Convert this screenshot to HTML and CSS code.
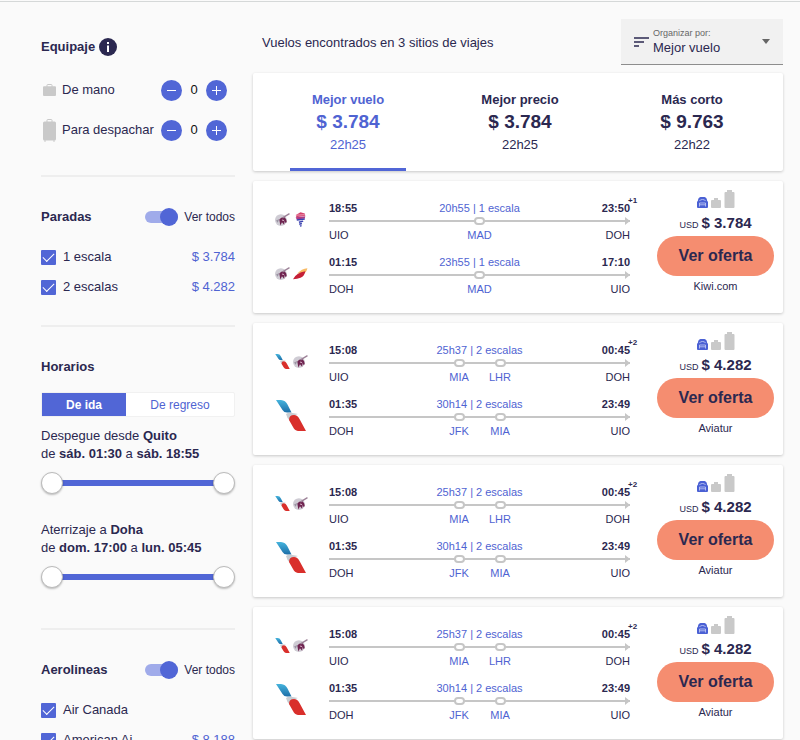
FILE: index.html
```html
<!DOCTYPE html>
<html lang="es">
<head>
    <meta charset="UTF-8">
    <meta name="viewport" content="width=device-width, initial-scale=1.0">
    <title>Vuelos Quito - Doha</title>
    <link rel="stylesheet" href="styles.css">
</head>
<body>
    <svg class="sprite" width="0" height="0" aria-hidden="true">
        <symbol id="cabin" viewBox="0 0 13 12">
            <path d="M4 3V1.200Q4 .5 4.700.5h3.600q.7 0 .7.7V3" fill="none" stroke="currentColor"/>
            <path d="M1 2.300h11q1 0 1 1V11q0 1-1 1H1q-1 0-1-1V3.300q0-1 1-1z" fill="currentColor"/>
        </symbol>
        <symbol id="suitcase" viewBox="0 0 13 23">
            <path d="M4 3V1.200Q4 .5 4.700.5h3.600q.7 0 .7.7V3" fill="none" stroke="currentColor"/>
            <path d="M1.500 2.500h10Q13 2.500 13 4v16q0 1.500-1.500 1.500V23h-1v-1.500h-8V23h-1v-1.500Q0 21.500 0 20V4q0-1.500 1.500-1.500z" fill="currentColor"/>
        </symbol>
        <symbol id="small-cabin" viewBox="0 0 10 10">
            <path d="M3 0h4v2h2q1 0 1 1v6q0 1-1 1H1q-1 0-1-1V3q0-1 1-1h2z" fill="currentColor"/>
        </symbol>
        <symbol id="small-suitcase" viewBox="0 0 11 18">
            <path d="M3 0h5v2h1.500q1 0 1 1v14q0 1-1 1h-8q-1 0-1-1V3q0-1 1-1H3z" fill="currentColor"/>
        </symbol>
        <symbol id="backpack" viewBox="0 0 11 11">
            <path d="M3.500 0h4Q10 .5 10 3.500l1 1.500v5q0 1-1 1H1q-1 0-1-1V5l1-1.500Q1 .5 3.500 0z" fill="#4a60d4"/>
            <path d="M2.500 4Q3 2.500 5.500 2.500T8.500 4M2.500 9.500V6h6v3.500M2.500 7.800h6" fill="none" stroke="#c9d0f5" stroke-width=".8"/>
        </symbol>
        <symbol id="qatar" viewBox="0 0 14 14">
            <circle cx="5.500" cy="7.500" r="5.500" fill="#cfccd4"/>
            <path d="M4 7Q6 4.500 9 5l1.500 2Q11.500 9 10 10.500l-1-2-.5 3.500-2-2.500L5 12.500z" fill="#6f2450"/>
            <path d="M7 5.500L13.500 1.500" stroke="#9d8298" stroke-width="1.300"/>
            <path d="M1 8l3-1.500L2.500 10z" fill="#9b94a3"/>
            <path d="M6.500 7.500l2 .5" stroke="#dcb3ca" stroke-width=".9"/>
        </symbol>
        <symbol id="latam" viewBox="0 0 14 14">
            <path d="M3 2.500L7 .3l4 1.200.5 2L3 5z" fill="#d4416c"/>
            <path d="M2.500 3l8.500-.5" stroke="#f3b5c8" stroke-width=".7"/>
            <path d="M2.500 5l9-1-.5 2-7.500 1z" fill="#b03a83"/>
            <path d="M3.500 7.500L11 6.500M5.500 9.500l4-1M5.800 11.500l2.500-.8M6.500 13.200l1.500-.5" fill="none" stroke="#3b42b0" stroke-width="1.400"/>
        </symbol>
        <symbol id="iberia" viewBox="0 0 14 14">
            <path d="M4 7Q8 2.500 13.500 2q-.5 2.500-2.500 4.500z" fill="#f8ba62"/>
            <path d="M0 12.300Q3 6.500 11.500 5q-.5 4.500-4.500 6-3 1.300-7 1.300z" fill="#c51f36"/>
        </symbol>
        <symbol id="american" viewBox="0 0 30 31">
            <linearGradient id="tail" x2="0" y2="1">
                <stop offset="0" stop-color="#45b4dd"/>
                <stop offset="1" stop-color="#1c6ea8"/>
            </linearGradient>
            <path d="M0 0h5q4.500.3 6.500 4.500L15.500 12.500H11Q8 12.500 6.500 10z" fill="url(#tail)"/>
            <path d="M10 14q2-1.500 5-1.200l7 1.200-6 2-2 5q-3-2.500-4-7z" fill="#c8ccd1"/>
            <path d="M13 20q0-5 5-5 3.500 0 5.500 4L30 31h-8q-3.500-.5-5-4z" fill="#d92f2b"/>
        </symbol>
    </svg>

    <div class="page">
        <aside class="filters">
            <section class="filter luggage">
                <div class="filter-head">
                    <h2>Equipaje</h2>
                    <svg class="info" viewBox="0 0 18 18" role="img" aria-label="Información">
                        <circle cx="9" cy="9" r="9" fill="#2b2850"/>
                        <path d="M8 4h2v2H8zM8 7.500h2V14H8z" fill="#fff"/>
                    </svg>
                </div>
                <div class="bag-row">
                    <svg class="bag-icon" width="13" height="12"><use href="#cabin"/></svg>
                    <span class="bag-name">De mano</span>
                    <button type="button" class="round" aria-label="Quitar equipaje de mano"><svg width="9" height="9"><path d="M0 4.500h9"/></svg></button>
                    <output>0</output>
                    <button type="button" class="round" aria-label="Agregar equipaje de mano"><svg width="9" height="9"><path d="M0 4.500h9M4.500 0v9"/></svg></button>
                </div>
                <div class="bag-row">
                    <svg class="bag-icon" width="13" height="23"><use href="#suitcase"/></svg>
                    <span class="bag-name">Para despachar</span>
                    <button type="button" class="round" aria-label="Quitar equipaje para despachar"><svg width="9" height="9"><path d="M0 4.500h9"/></svg></button>
                    <output>0</output>
                    <button type="button" class="round" aria-label="Agregar equipaje para despachar"><svg width="9" height="9"><path d="M0 4.500h9M4.500 0v9"/></svg></button>
                </div>
            </section>

            <section class="filter">
                <div class="filter-head">
                    <h2>Paradas</h2>
                    <label class="switch"><input type="checkbox" checked>Ver todos</label>
                </div>
                <div class="check-row">
                    <label><input type="checkbox" checked>1 escala</label>
                    <span class="blue">$ 3.784</span>
                </div>
                <div class="check-row">
                    <label><input type="checkbox" checked>2 escalas</label>
                    <span class="blue">$ 4.282</span>
                </div>
            </section>

            <section class="filter schedule">
                <div class="filter-head">
                    <h2>Horarios</h2>
                </div>
                <div class="segmented">
                    <button type="button" class="active">De ida</button>
                    <button type="button">De regreso</button>
                </div>
                <p>Despegue desde <b>Quito</b><br>de <b>sáb. 01:30</b> a <b>sáb. 18:55</b></p>
                <div class="range">
                    <input type="range" min="0" max="100" value="0" aria-label="Despegue desde">
                    <input type="range" min="0" max="100" value="100" aria-label="Despegue hasta">
                </div>
                <p class="arrival">Aterrizaje a <b>Doha</b><br>de <b>dom. 17:00</b> a <b>lun. 05:45</b></p>
                <div class="range">
                    <input type="range" min="0" max="100" value="0" aria-label="Aterrizaje desde">
                    <input type="range" min="0" max="100" value="100" aria-label="Aterrizaje hasta">
                </div>
            </section>

            <section class="filter">
                <div class="filter-head">
                    <h2>Aerolineas</h2>
                    <label class="switch"><input type="checkbox" checked>Ver todos</label>
                </div>
                <div class="check-row">
                    <label><input type="checkbox" checked>Air Canada</label>
                </div>
                <div class="check-row">
                    <label><input type="checkbox" checked>American Ai</label>
                    <span class="blue">$ 8.188</span>
                </div>
            </section>
        </aside>

        <main class="results">
            <div class="results-head">
                <p>Vuelos encontrados en 3 sitios de viajes</p>
                <div class="sort">
                    <svg width="15" height="10"><path d="M0 1h15M0 5h10M0 9h5" stroke="#2b2850" stroke-width="1.500"/></svg>
                    <div class="sort-field">
                        <label for="sort">Organizar por:</label>
                        <select id="sort">
                            <option>Mejor vuelo</option>
                            <option>Mejor precio</option>
                            <option>Más corto</option>
                        </select>
                    </div>
                    <svg width="8" height="5"><path d="M0 0h8L4 5z" fill="#666"/></svg>
                </div>
            </div>

            <nav class="tabs">
                <button type="button" class="tab active"><b>Mejor vuelo</b><strong>$ 3.784</strong><span>22h25</span></button>
                <button type="button" class="tab"><b>Mejor precio</b><strong>$ 3.784</strong><span>22h25</span></button>
                <button type="button" class="tab"><b>Más corto</b><strong>$ 9.763</strong><span>22h22</span></button>
            </nav>

            <article class="flight">
                <div class="legs">
                    <div class="leg">
                        <div class="logos"><svg><use href="#qatar"/></svg><svg><use href="#latam"/></svg></div>
                        <div class="route">
                            <b>18:55</b><span class="blue">20h55 | 1 escala</span><b class="end">23:50<sup>+1</sup></b>
                            <div class="line"><i></i></div>
                            <span>UIO</span><div class="stops"><span>MAD</span></div><span class="end">DOH</span>
                        </div>
                    </div>
                    <div class="leg">
                        <div class="logos"><svg><use href="#qatar"/></svg><svg><use href="#iberia"/></svg></div>
                        <div class="route">
                            <b>01:15</b><span class="blue">23h55 | 1 escala</span><b class="end">17:10</b>
                            <div class="line"><i></i></div>
                            <span>DOH</span><div class="stops"><span>MAD</span></div><span class="end">UIO</span>
                        </div>
                    </div>
                </div>
                <div class="offer">
                    <div class="bags"><svg width="11" height="11"><use href="#backpack"/></svg><svg width="10" height="10"><use href="#small-cabin"/></svg><svg width="11" height="18"><use href="#small-suitcase"/></svg></div>
                    <div class="price"><small>USD</small> <b>$ 3.784</b></div>
                    <button type="button" class="cta">Ver oferta</button>
                    <div class="agency">Kiwi.com</div>
                </div>
            </article>

            <article class="flight">
                <div class="legs">
                    <div class="leg">
                        <div class="logos"><svg><use href="#american"/></svg><svg><use href="#qatar"/></svg></div>
                        <div class="route">
                            <b>15:08</b><span class="blue">25h37 | 2 escalas</span><b class="end">00:45<sup>+2</sup></b>
                            <div class="line"><i></i><i></i></div>
                            <span>UIO</span><div class="stops"><span>MIA</span><span>LHR</span></div><span class="end">DOH</span>
                        </div>
                    </div>
                    <div class="leg">
                        <div class="logos single"><svg><use href="#american"/></svg></div>
                        <div class="route">
                            <b>01:35</b><span class="blue">30h14 | 2 escalas</span><b class="end">23:49</b>
                            <div class="line"><i></i><i></i></div>
                            <span>DOH</span><div class="stops"><span>JFK</span><span>MIA</span></div><span class="end">UIO</span>
                        </div>
                    </div>
                </div>
                <div class="offer">
                    <div class="bags"><svg width="11" height="11"><use href="#backpack"/></svg><svg width="10" height="10"><use href="#small-cabin"/></svg><svg width="11" height="18"><use href="#small-suitcase"/></svg></div>
                    <div class="price"><small>USD</small> <b>$ 4.282</b></div>
                    <button type="button" class="cta">Ver oferta</button>
                    <div class="agency">Aviatur</div>
                </div>
            </article>

            <article class="flight">
                <div class="legs">
                    <div class="leg">
                        <div class="logos"><svg><use href="#american"/></svg><svg><use href="#qatar"/></svg></div>
                        <div class="route">
                            <b>15:08</b><span class="blue">25h37 | 2 escalas</span><b class="end">00:45<sup>+2</sup></b>
                            <div class="line"><i></i><i></i></div>
                            <span>UIO</span><div class="stops"><span>MIA</span><span>LHR</span></div><span class="end">DOH</span>
                        </div>
                    </div>
                    <div class="leg">
                        <div class="logos single"><svg><use href="#american"/></svg></div>
                        <div class="route">
                            <b>01:35</b><span class="blue">30h14 | 2 escalas</span><b class="end">23:49</b>
                            <div class="line"><i></i><i></i></div>
                            <span>DOH</span><div class="stops"><span>JFK</span><span>MIA</span></div><span class="end">UIO</span>
                        </div>
                    </div>
                </div>
                <div class="offer">
                    <div class="bags"><svg width="11" height="11"><use href="#backpack"/></svg><svg width="10" height="10"><use href="#small-cabin"/></svg><svg width="11" height="18"><use href="#small-suitcase"/></svg></div>
                    <div class="price"><small>USD</small> <b>$ 4.282</b></div>
                    <button type="button" class="cta">Ver oferta</button>
                    <div class="agency">Aviatur</div>
                </div>
            </article>

            <article class="flight">
                <div class="legs">
                    <div class="leg">
                        <div class="logos"><svg><use href="#american"/></svg><svg><use href="#qatar"/></svg></div>
                        <div class="route">
                            <b>15:08</b><span class="blue">25h37 | 2 escalas</span><b class="end">00:45<sup>+2</sup></b>
                            <div class="line"><i></i><i></i></div>
                            <span>UIO</span><div class="stops"><span>MIA</span><span>LHR</span></div><span class="end">DOH</span>
                        </div>
                    </div>
                    <div class="leg">
                        <div class="logos single"><svg><use href="#american"/></svg></div>
                        <div class="route">
                            <b>01:35</b><span class="blue">30h14 | 2 escalas</span><b class="end">23:49</b>
                            <div class="line"><i></i><i></i></div>
                            <span>DOH</span><div class="stops"><span>JFK</span><span>MIA</span></div><span class="end">UIO</span>
                        </div>
                    </div>
                </div>
                <div class="offer">
                    <div class="bags"><svg width="11" height="11"><use href="#backpack"/></svg><svg width="10" height="10"><use href="#small-cabin"/></svg><svg width="11" height="18"><use href="#small-suitcase"/></svg></div>
                    <div class="price"><small>USD</small> <b>$ 4.282</b></div>
                    <button type="button" class="cta">Ver oferta</button>
                    <div class="agency">Aviatur</div>
                </div>
            </article>
        </main>
    </div>
</body>
</html>
```
FILE: styles.css
```css
* {
    box-sizing: border-box;
}
body {
    margin: 0;
    height: 100vh;
    overflow: hidden;
    background-color: #fafafa;
    color: #2b2850;
    font-family: "Liberation Sans", Arial, sans-serif;
    font-size: 13px;
    line-height: 18px;
}
button, select, input {
    font-family: inherit;
    color: inherit;
    margin: 0;
}
button {
    border: none;
    padding: 0;
    background: none;
    cursor: pointer;
}
h2, p {
    margin: 0;
}
svg {
    display: block;
    flex: none;
}
.sprite {
    position: absolute;
}
.blue {
    color: #4f63d2;
}
.page {
    display: flex;
    gap: 18px;
    padding: 0 17px 0 41px;
    border-top: 1px solid #fafafa;
    box-shadow: inset 0 1px #d5d8d8;
}

/* filters */
.filters {
    width: 194px;
    flex: none;
    padding-top: 6px;
}
.filter {
    padding: 26px 0 23px;
    border-bottom: 2px solid #eee;
}
.filter-head {
    display: flex;
    align-items: center;
    height: 28px;
    margin-bottom: 11px;
}
.filter-head h2 {
    font-size: 13px;
}
.luggage {
    padding-bottom: 25px;
}
.luggage .filter-head {
    margin-bottom: 9px;
}
.info {
    width: 18px;
    height: 18px;
    margin-left: 4px;
}
.bag-row {
    display: flex;
    align-items: center;
    height: 40px;
    padding-right: 8px;
}
.bag-icon {
    margin: 0 6px 0 2px;
    color: #c9c9c9;
}
.bag-name {
    flex: 1;
    white-space: nowrap;
}
.bag-row output {
    width: 24px;
    text-align: center;
    color: #111;
}
.round {
    display: grid;
    place-items: center;
    width: 21px;
    height: 21px;
    border-radius: 50%;
    background-color: #5166d6;
}
.round path {
    stroke: #fff;
    stroke-width: 1;
}
.switch {
    display: flex;
    align-items: center;
    margin-left: auto;
    font-size: 12px;
}
.switch input {
    appearance: none;
    display: flex;
    align-items: center;
    width: 33px;
    height: 12px;
    margin-right: 6px;
    background-color: #a0abea;
    border-radius: 6px;
}
.switch input::before {
    content: "";
    width: 18px;
    height: 18px;
    margin-left: auto;
    border-radius: 50%;
    background-color: #5166d6;
}
.check-row {
    display: flex;
    align-items: center;
    justify-content: space-between;
    height: 30px;
}
.check-row label {
    display: flex;
    align-items: center;
}
.check-row input {
    appearance: none;
    display: grid;
    place-items: center;
    width: 15px;
    height: 15px;
    margin-right: 7px;
    border-radius: 1px;
    background-color: #5166d6;
}
.check-row input:checked::before {
    content: "";
    width: 10px;
    height: 5px;
    margin-bottom: 3px;
    border: solid #fff;
    border-width: 0 0 1px 1px;
    transform: rotate(-45deg);
}
.schedule {
    padding-bottom: 40px;
}
.segmented {
    display: flex;
    height: 25px;
    margin-bottom: 10px;
    border: 1px solid #f1f1f1;
    border-radius: 2px;
    background-color: #fff;
}
.segmented button {
    flex: 1 1 108px;
    font-size: 12px;
    color: #4f63d2;
}
.segmented .active {
    flex-basis: 84px;
    background-color: #5166d6;
    color: #fff;
    font-weight: bold;
}
.schedule .arrival {
    margin-top: 27px;
}
.range {
    display: grid;
    height: 22px;
    margin-top: 9px;
    background: linear-gradient(#5166d6, #5166d6) center / 90% 6px no-repeat;
}
.range input {
    grid-area: 1 / 1;
    appearance: none;
    width: 100%;
    height: 22px;
    background: none;
    pointer-events: none;
}
.range input::-webkit-slider-thumb {
    appearance: none;
    width: 22px;
    height: 22px;
    border: 1px solid #bbb;
    border-radius: 50%;
    background-color: #fff;
    box-shadow: 0 1px 2px rgba(0, 0, 0, 0.25);
    pointer-events: auto;
}

/* results */
.results {
    flex: 1;
    min-width: 0;
    padding-top: 18px;
}
.results-head {
    display: flex;
    justify-content: space-between;
    padding-left: 9px;
    margin-bottom: 8px;
}
.results-head p {
    padding-top: 15px;
}
.sort {
    display: flex;
    align-items: center;
    width: 162px;
    height: 46px;
    padding: 0 13px;
    border-bottom: 1px solid #8d8d8d;
    background-color: #f1f1f1;
}
.sort-field {
    display: flex;
    flex-direction: column;
    flex: 1;
    padding-left: 4px;
}
.sort-field label {
    font-size: 9px;
    line-height: 12px;
    color: #666;
}
.sort-field select {
    appearance: none;
    width: 100%;
    padding: 0;
    border: none;
    background: none;
    font-size: 13px;
    line-height: 18px;
}
.tabs, .flight {
    background-color: #fff;
    border-radius: 2px;
    box-shadow: 0 1px 3px rgba(0, 0, 0, 0.2);
}
.tabs {
    display: flex;
    padding: 0 5px 0 9px;
}
.tab {
    flex: 1;
    display: flex;
    flex-direction: column;
    align-items: center;
    height: 98px;
    padding-top: 18px;
    font-size: 13px;
    line-height: 18px;
}
.tab strong {
    font-size: 19px;
    line-height: 26px;
}
.tab span {
    line-height: 20px;
}
.tab.active {
    color: #4f63d2;
}
.tab.active::after {
    content: "";
    width: 68%;
    height: 3px;
    margin-top: auto;
    background-color: #5166d6;
}
.flight {
    display: flex;
    gap: 27px;
    margin-top: 10px;
    padding: 9px 9px 15px 22px;
    font-size: 11px;
}
.legs {
    flex: 1;
    display: flex;
    flex-direction: column;
    gap: 10px;
    padding-top: 10px;
}
.leg {
    display: flex;
    gap: 22px;
}
.logos {
    display: flex;
    align-items: center;
    gap: 3px;
    width: 32px;
    height: 38px;
}
.logos svg {
    width: 15px;
    height: 15px;
}
.logos.single svg {
    width: 32px;
    height: 31px;
}
.route {
    flex: 1;
    display: grid;
    grid-template-columns: 1fr auto 1fr;
    grid-template-rows: 16px 10px 18px;
    align-items: center;
}
.route .end {
    justify-self: end;
    position: relative;
}
.route sup {
    position: absolute;
    left: 100%;
    top: -4px;
    margin-left: -2px;
    font-size: 8px;
    line-height: 12px;
}
.line {
    grid-column: 1 / -1;
    position: relative;
    display: flex;
    align-items: center;
    justify-content: center;
    gap: 30px;
    height: 8px;
    background: linear-gradient(#c6c6c6, #c6c6c6) center / 100% 2px no-repeat;
}
.line::after {
    content: "";
    position: absolute;
    right: 0;
    top: 0;
    border: solid transparent;
    border-width: 4px 0 4px 5px;
    border-left-color: #c6c6c6;
}
.line i {
    width: 11px;
    height: 8px;
    border: 2px solid #c6c6c6;
    border-radius: 4px;
    background-color: #fff;
}
.stops {
    display: flex;
    justify-content: center;
    color: #4f63d2;
}
.stops span {
    width: 41px;
    text-align: center;
}
.offer {
    width: 117px;
    display: flex;
    flex-direction: column;
    align-items: center;
}
.bags {
    display: flex;
    align-items: flex-end;
    gap: 3px;
    color: #c9c9c9;
}
.price {
    margin-top: 6px;
    line-height: 18px;
    height: 22px;
}
.price small {
    font-size: 9px;
}
.price b {
    font-size: 15px;
    line-height: 18px;
}
.cta {
    width: 100%;
    height: 40px;
    border-radius: 20px;
    background-color: #f58d70;
    font-size: 19px;
    font-weight: bold;
}
.cta {
    font-size: 16px;
}
.agency {
    margin-top: 3px;
    line-height: 14px;
}
```
